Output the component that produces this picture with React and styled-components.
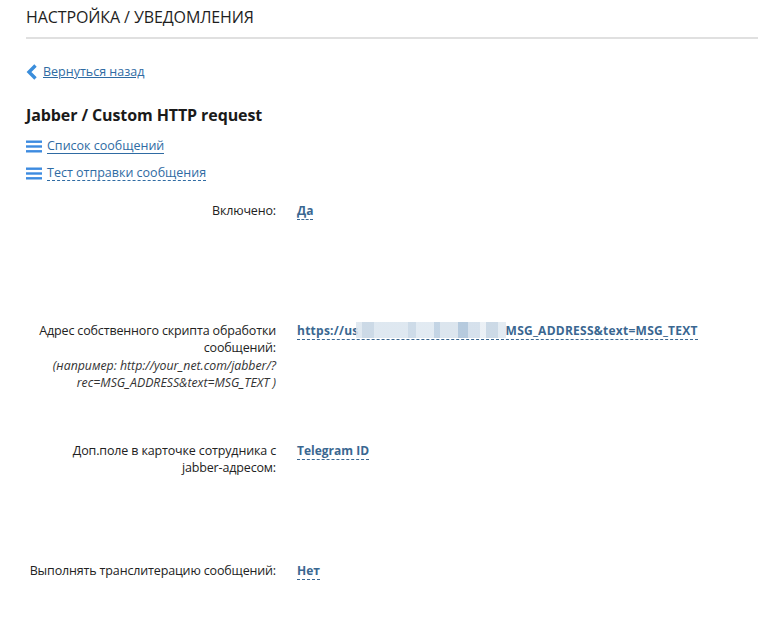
import React from "react";
import styled, { createGlobalStyle } from "styled-components";

const GlobalStyle = createGlobalStyle`
  body {
    margin: 0;
    background: #fff;
    font-family: "Open Sans", "Noto Sans", sans-serif;
    color: #222;
  }
`;

const Page = styled.div`
  padding: 0 0 0 26px;
`;

const Header = styled.h1`
  margin: 0;
  padding: 6px 0 9px;
  font-size: 16px;
  font-weight: 400;
  color: #1e1e1e;
  border-bottom: 2px solid #e0e0e0;
  letter-spacing: -0.1px;
`;

const Back = styled.a`
  display: inline-flex;
  align-items: center;
  gap: 5px;
  margin-top: 24px;
  font-size: 12.5px;
  color: #2f6ba3;
  text-decoration: underline;
  cursor: pointer;
`;

const Title = styled.h2`
  margin: 19px 0 7px;
  font-size: 16px;
  font-weight: 700;
  color: #1a1a1a;
  letter-spacing: -0.1px;
`;

const MenuItem = styled.div`
  display: flex;
  align-items: center;
  gap: 5px;
  height: 27px;
  font-size: 12.5px;
`;

const MenuLink = styled.a`
  color: #2f6ba3;
  text-decoration: none;
  border-bottom: 1px ${(p) => (p.dashed ? "dashed" : "solid")} #2f6ba3;
  line-height: 15px;
  cursor: pointer;
`;

const Form = styled.div`
  margin-top: 15px;
  display: grid;
  grid-template-columns: 250px 1fr;
  grid-template-rows: 120px 120px 120.5px auto;
  column-gap: 21px;
`;

const Label = styled.div`
  text-align: right;
  font-size: 12.5px;
  line-height: 17.5px;
  letter-spacing: -0.15px;
  color: #222;
`;

const NoWrap = styled.span`
  white-space: nowrap;
`;

const Hint = styled.div`
  font-size: 12.3px;
  letter-spacing: 0;
  font-style: italic;
  color: #333;
`;

const Value = styled.div`
  font-size: 12px;
  line-height: 17.5px;
`;

const ValueLink = styled.span`
  font-weight: 700;
  color: #3a6791;
  border-bottom: 1px dashed #3a6791;
  cursor: pointer;
  white-space: nowrap;
  letter-spacing: ${(p) => (p.wide ? "0.25px" : "0")};
`;

const Blur = styled.span`
  display: inline-block;
  vertical-align: -3px;
  width: 150px;
  height: 16px;
  margin-left: -3px;
  background:
    linear-gradient(90deg, #dbe5ee 0 6px, #c3d3e2 6px 18px, #d9e4ee 18px 52px, #c5d5e4 52px 60px, #dde7f0 60px 78px, #b9cde0 78px 84px, #d6e1eb 84px 102px, #a9c1d8 102px 112px, #cfdce9 112px 124px, #e8eef4 124px 130px, #c3d3e2 130px 142px, #dfe8f0 142px 150px);
  opacity: 0.85;
`;

const Chevron = () => (
  <svg width="12" height="16" viewBox="0 0 12 16">
    <path d="M9.5 1.5 L3 8 L9.5 14.5" fill="none" stroke="#3a8ddb" strokeWidth="3.4" strokeLinejoin="miter" />
  </svg>
);

const Burger = () => (
  <svg width="16" height="13" viewBox="0 0 16 13">
    <rect x="0" y="0.5" width="16" height="2.4" fill="#3d8be0" />
    <rect x="0" y="5.3" width="16" height="2.4" fill="#3d8be0" />
    <rect x="0" y="10.1" width="16" height="2.4" fill="#3d8be0" />
  </svg>
);

export default function App() {
  return (
    <Page>
      <GlobalStyle />
      <Header>НАСТРОЙКА / УВЕДОМЛЕНИЯ</Header>
      <Back>
        <Chevron />
        Вернуться назад
      </Back>
      <Title>Jabber / Custom HTTP request</Title>
      <MenuItem>
        <Burger />
        <MenuLink>Список сообщений</MenuLink>
      </MenuItem>
      <MenuItem>
        <Burger />
        <MenuLink dashed>Тест отправки сообщения</MenuLink>
      </MenuItem>
      <Form>
        <Label>Включено:</Label>
        <Value>
          <ValueLink>Да</ValueLink>
        </Value>

        <Label>
          Адрес собственного скрипта обработки сообщений:
          <Hint>(например: http://your_net.com/jabber/?rec=MSG_ADDRESS&amp;text=MSG_TEXT )</Hint>
        </Label>
        <Value>
          <ValueLink wide>
            https://us<Blur />MSG_ADDRESS&amp;text=MSG_TEXT
          </ValueLink>
        </Value>

        <Label>
          Доп.поле в карточке сотрудника с <NoWrap>jabber-адресом:</NoWrap>
        </Label>
        <Value>
          <ValueLink>Telegram ID</ValueLink>
        </Value>

        <Label>Выполнять транслитерацию сообщений:</Label>
        <Value>
          <ValueLink>Нет</ValueLink>
        </Value>
      </Form>
    </Page>
  );
}
